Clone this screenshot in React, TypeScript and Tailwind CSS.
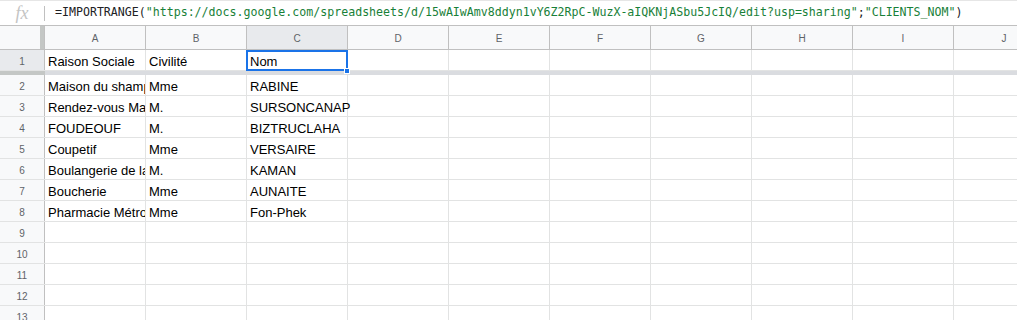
import React from "react";

const COLS = ["A", "B", "C", "D", "E", "F", "G", "H", "I", "J"];

const DATA: string[][] = [
  ["Raison Sociale", "Civilité", "Nom"],
  ["Maison du shampoing", "Mme", "RABINE"],
  ["Rendez-vous Madame", "M.", "SURSONCANAP"],
  ["FOUDEOUF", "M.", "BIZTRUCLAHA"],
  ["Coupetif", "Mme", "VERSAIRE"],
  ["Boulangerie de la gare", "M.", "KAMAN"],
  ["Boucherie", "Mme", "AUNAITE"],
  ["Pharmacie Métropole", "Mme", "Fon-Phek"],
];

const ROW_COUNT = 13;

function Cell({ value, clip }: { value?: string; clip: boolean }) {
  return (
    <div className="relative h-full w-[101px] shrink-0 border-r border-[#e2e3e3]">
      {value && (
        <span
          className={`absolute bottom-[1px] left-[3px] whitespace-nowrap text-[13px] leading-[15px] text-black ${
            clip ? "right-0 overflow-hidden" : ""
          }`}
        >
          {value}
        </span>
      )}
    </div>
  );
}

function Row({ n }: { n: number }) {
  const values = DATA[n - 1] ?? [];
  const first = n === 1;
  return (
    <div className="flex h-[21px] border-b border-[#e2e3e3]">
      <div
        className={`flex h-full w-[45px] shrink-0 items-center justify-center border-r border-[#c0c0c0] pt-[2px] text-[10px] text-[#5f6368] ${
          first ? "bg-[#e8eaed]" : "bg-[#f8f9fa]"
        }`}
      >
        {n}
      </div>
      {COLS.map((c, i) => (
        <Cell key={c} value={values[i]} clip={!!values[i + 1]} />
      ))}
    </div>
  );
}

export default function App() {
  return (
    <div
      className="h-[320px] w-[1017px] overflow-hidden bg-white"
      style={{ fontFamily: "'Liberation Sans', Arial, sans-serif" }}
    >
      {/* formula bar */}
      <div className="flex h-[26px] items-center border-t border-b border-t-[#e6e6e6] border-b-[#c0c0c0]">
        <div className="flex w-[44px] shrink-0 items-center justify-center">
          <span
            className="text-[18px] italic leading-none text-[#c4c4c4]"
            style={{ fontFamily: "'Liberation Serif', 'Times New Roman', serif" }}
          >
            fx
          </span>
        </div>
        <div className="h-[15px] w-px bg-[#c0c0c0]" />
        <div
          className="ml-[10px] whitespace-nowrap text-[11.6px] text-[#202124]"
          style={{ fontFamily: "'DejaVu Sans Mono', 'Liberation Mono', monospace" }}
        >
          =IMPORTRANGE(
          <span className="text-[#188038]">
            "https://docs.google.com/spreadsheets/d/15wAIwAmv8ddyn1vY6Z2RpC-WuzX-aIQKNjASbu5JcIQ/edit?usp=sharing"
          </span>
          ;<span className="text-[#188038]">"CLIENTS_NOM"</span>)
        </div>
      </div>

      {/* column headers */}
      <div className="flex h-[24px] border-b border-[#c0c0c0] bg-[#f8f9fa]">
        <div className="flex h-full w-[45px] shrink-0 justify-end border-r border-[#c0c0c0]">
          <div className="h-full w-[4px] bg-[#c4c7c5]" />
        </div>
        {COLS.map((c) => (
          <div
            key={c}
            className={`flex h-full w-[101px] shrink-0 items-center justify-center border-r border-[#c0c0c0] pt-[1px] text-[10px] text-[#5f6368] ${
              c === "C" ? "bg-[#e8eaed]" : ""
            }`}
          >
            {c}
          </div>
        ))}
      </div>

      {/* grid */}
      <div className="relative">
        <Row n={1} />
        <div className="flex h-[4px]">
          <div className="w-[45px] shrink-0 bg-[#c4c7c5]" />
          <div className="flex-1 bg-[#dadce0]" />
        </div>
        {Array.from({ length: ROW_COUNT - 1 }, (_, i) => (
          <Row key={i + 2} n={i + 2} />
        ))}

        {/* selection on C1 */}
        <div className="pointer-events-none absolute left-[246px] top-0 h-[21px] w-[102px] border-2 border-[#1a73e8]" />
        <div className="pointer-events-none absolute left-[344px] top-[18px] h-[6px] w-[6px] border border-white bg-[#1a73e8]" />
      </div>
    </div>
  );
}
